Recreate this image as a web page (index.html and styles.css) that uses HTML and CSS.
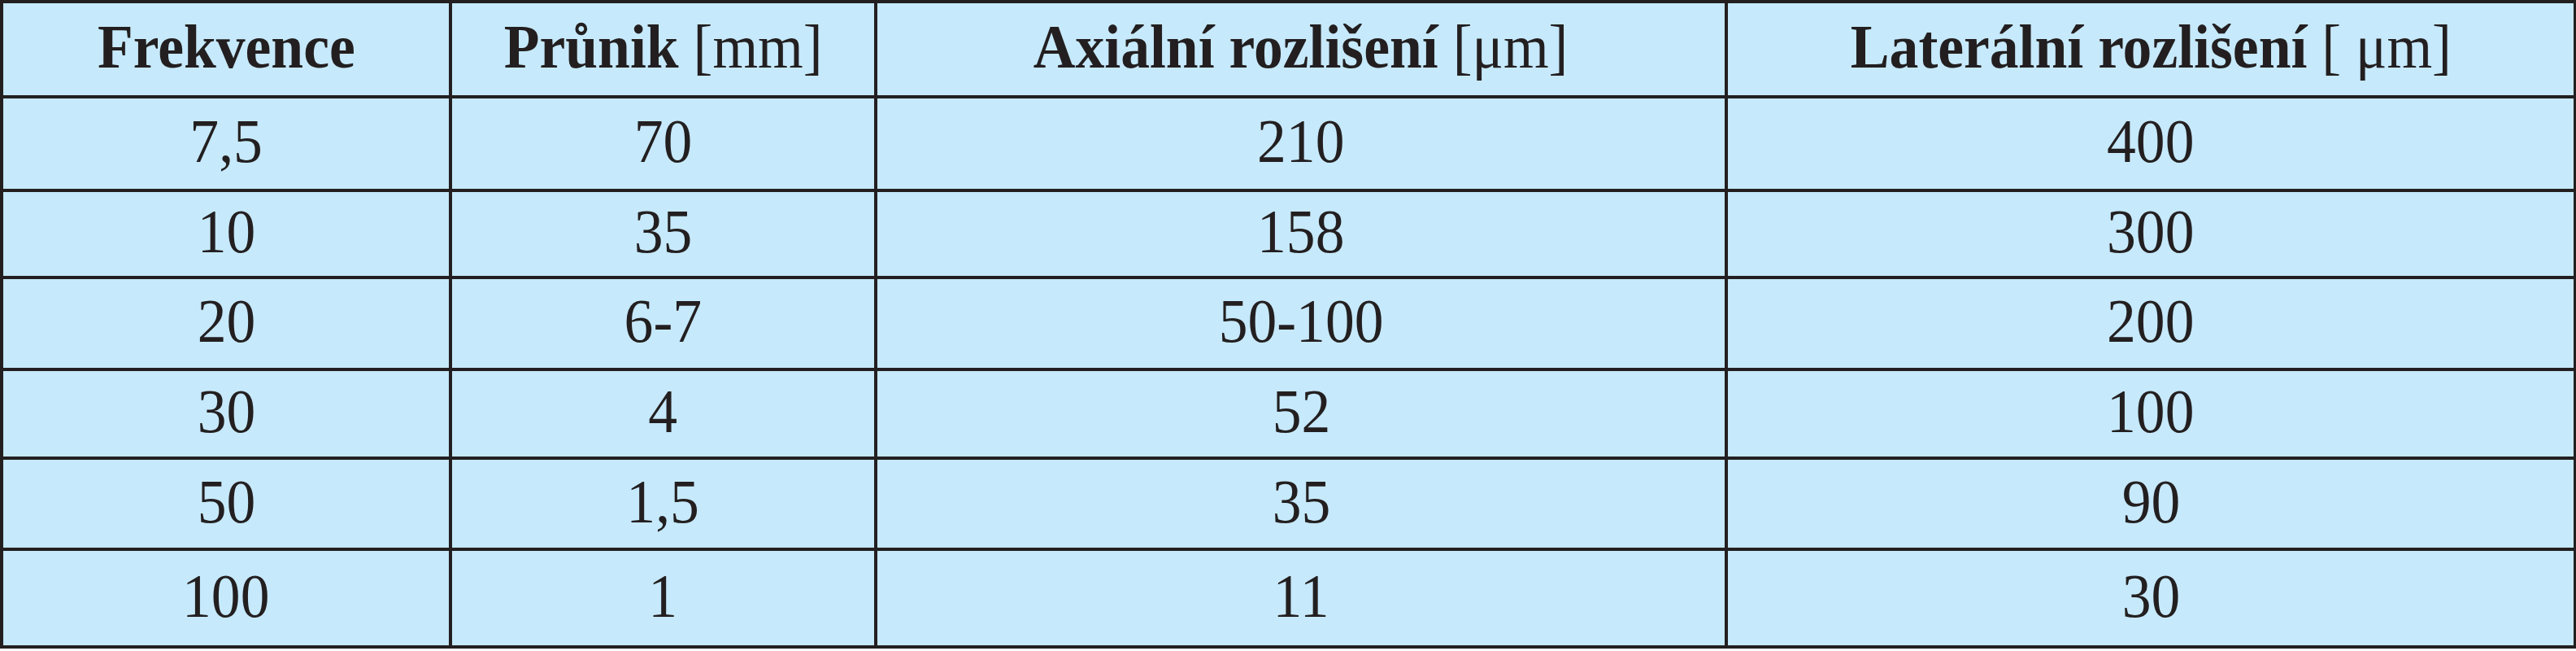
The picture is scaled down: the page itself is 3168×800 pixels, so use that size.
FILE: index.html
```html
<!DOCTYPE html>
<html lang="cs">
<head>
<meta charset="utf-8">
<title>Frekvence</title>
<link rel="stylesheet" href="styles.css">
</head>
<body>
<table class="grid">
  <colgroup>
    <col class="c1"><col class="c2"><col class="c3"><col class="c4">
  </colgroup>
  <thead>
    <tr>
      <th><span class="t">Frekvence</span></th>
      <th><span class="t">Průnik <span class="n">[mm]</span></span></th>
      <th><span class="t">Axiální rozlišení <span class="n">[μm]</span></span></th>
      <th><span class="t">Laterální rozlišení <span class="n">[ μm]</span></span></th>
    </tr>
  </thead>
  <tbody>
    <tr><td><span class="t">7,5</span></td><td><span class="t">70</span></td><td><span class="t">210</span></td><td><span class="t">400</span></td></tr>
    <tr><td><span class="t">10</span></td><td><span class="t">35</span></td><td><span class="t">158</span></td><td><span class="t">300</span></td></tr>
    <tr><td><span class="t">20</span></td><td><span class="t">6-7</span></td><td><span class="t">50-100</span></td><td><span class="t">200</span></td></tr>
    <tr><td><span class="t">30</span></td><td><span class="t">4</span></td><td><span class="t">52</span></td><td><span class="t">100</span></td></tr>
    <tr><td><span class="t">50</span></td><td><span class="t">1,5</span></td><td><span class="t">35</span></td><td><span class="t">90</span></td></tr>
    <tr><td><span class="t">100</span></td><td><span class="t">1</span></td><td><span class="t">11</span></td><td><span class="t">30</span></td></tr>
  </tbody>
</table>
</body>
</html>
```
FILE: styles.css
```css
html, body {
  margin: 0;
  padding: 0;
  background: #ffffff;
}
.grid {
  border-collapse: collapse;
  table-layout: fixed;
  width: 3165px;
  background: #c6e9fb;
  font-family: "Liberation Serif", "Times New Roman", serif;
  color: #231f20;
}
.c1 { width: 552px; }
.c2 { width: 523px; }
.c3 { width: 1046px; }
.c4 { width: 1044px; }
.grid th,
.grid td {
  border: 4px solid #231f20;
  text-align: center;
  vertical-align: middle;
  padding: 0;
  font-size: 77px;
  line-height: 1;
  white-space: nowrap;
}
.grid th {
  font-weight: bold;
  height: 113px;
}
.grid td {
  font-weight: normal;
}
.grid .n {
  font-weight: normal;
}
.t {
  display: inline-block;
  transform: scaleX(0.93);
  position: relative;
  top: -3px;
}
.grid tbody tr:nth-child(1) td { height: 111px; }
.grid tbody tr:nth-child(2) td { height: 103px; }
.grid tbody tr:nth-child(3) td { height: 109px; }
.grid tbody tr:nth-child(4) td { height: 105px; }
.grid tbody tr:nth-child(5) td { height: 108px; }
.grid tbody tr:nth-child(6) td { height: 116px; }
```
